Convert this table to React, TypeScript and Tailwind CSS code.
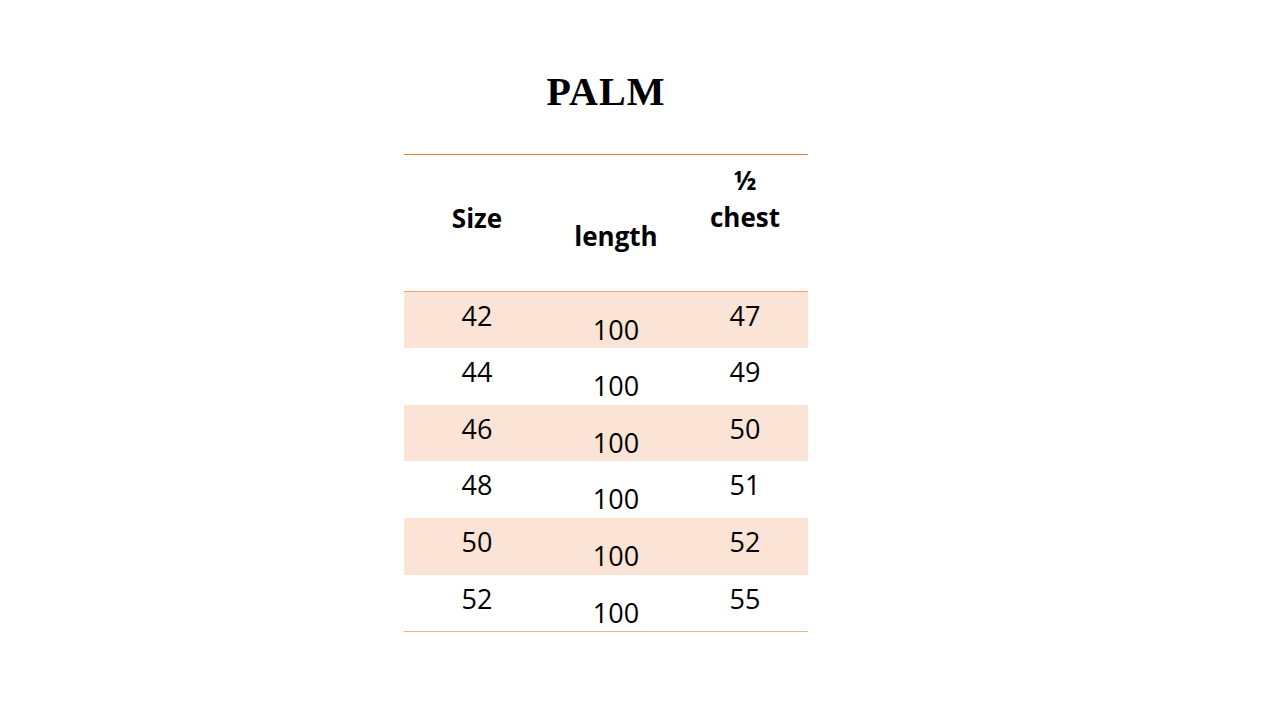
const rows = [
  { cells: ['42', '100', '47'], h: 'h-[56px]' },
  { cells: ['44', '100', '49'], h: 'h-[57px]' },
  { cells: ['46', '100', '50'], h: 'h-[56px]' },
  { cells: ['48', '100', '51'], h: 'h-[57px]' },
  { cells: ['50', '100', '52'], h: 'h-[57px]' },
  { cells: ['52', '100', '55'], h: 'h-[56px]' },
];

export default function App() {
  return (
    <div className="w-[1280px] h-[720px] bg-white" style={{ fontFamily: '"Open Sans", sans-serif' }}>
      <div className="pl-[404px] pt-[66px]">
        <div className="w-[404px]">
          <h1
            className="text-center text-[40px] leading-[52px] font-bold text-black tracking-[1px]"
            style={{ fontFamily: '"Liberation Serif", serif' }}
          >
            PALM
          </h1>

          <div className="mt-[36px] border-t border-[#ED7D31]">
            {/* Header */}
            <div className="grid grid-cols-[146px_132px_126px] h-[137px] border-b border-[#F4A070] text-[26px] font-bold text-black">
              <div className="text-center pt-[47px] leading-[32px]">Size</div>
              <div className="text-center pt-[65px] leading-[32px]">length</div>
              <div className="text-center pt-[7px] leading-[37px]">
                <div>½</div>
                <div>chest</div>
              </div>
            </div>

            {/* Rows */}
            {rows.map((r, i) => (
              <div
                key={i}
                className={
                  'grid grid-cols-[146px_132px_126px] text-[27px] text-black ' +
                  r.h +
                  (i % 2 === 0 ? ' bg-[#FBE4D5]' : ' bg-white')
                }
              >
                <div className="text-center pt-[8px] leading-[32px]">{r.cells[0]}</div>
                <div className="text-center pt-[22px] leading-[32px]">{r.cells[1]}</div>
                <div className="text-center pt-[8px] leading-[32px]">{r.cells[2]}</div>
              </div>
            ))}
            <div className="h-px bg-[#F4B083]" />
          </div>
        </div>
      </div>
    </div>
  );
}
